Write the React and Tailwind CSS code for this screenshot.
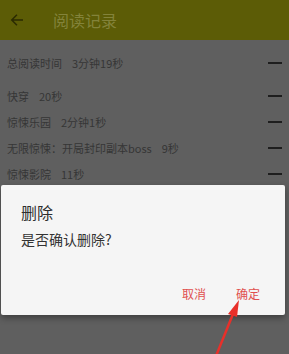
import React from 'react';

const rows = [
  { name: '快穿', time: '20秒' },
  { name: '惊悚乐园', time: '2分钟1秒' },
  { name: '无限惊悚：开局封印副本boss', time: '9秒' },
  { name: '惊悚影院', time: '11秒' },
];

const font = { fontFamily: '"Noto Sans CJK SC", "Noto Sans", sans-serif' };

// one record line with the delete dash on the right
const Row = ({ name, time }) => (
  <div className="flex h-[26px] items-center justify-between pl-[7px] pr-[7px]">
    <div className="flex items-center text-[11px] text-[#363636]">
      <span>{name}</span>
      <span className="ml-[10px]">{time}</span>
    </div>
    <div className="h-[2px] w-[14px] bg-[#1e1e1e]" />
  </div>
);

const App = () => {
  return (
    <div className="relative h-[354px] w-[289px] overflow-hidden bg-[#5f5f5f]" style={font}>
      {/* header */}
      <div className="flex h-[40px] items-center bg-[#5c5c06]">
        <svg className="ml-[10px] h-[14px] w-[14px]" viewBox="0 0 24 24" fill="none" stroke="#2a2a02" strokeWidth="2.6" strokeLinecap="square">
          <path d="M21 12H4M11 4l-8 8 8 8" />
        </svg>
        <span className="ml-[29px] text-[16px] text-[#83833a]">阅读记录</span>
      </div>

      {/* list */}
      <div className="pt-[10px]">
        <Row name="总阅读时间" time="3分钟19秒" />
        <div className="mt-[7px]">
          {rows.map((r) => (
            <Row key={r.name} name={r.name} time={r.time} />
          ))}
        </div>
      </div>

      {/* dialog */}
      <div className="absolute left-[1px] top-[185px] flex h-[130px] w-[284px] flex-col rounded-[2px] bg-[#f5f5f5] shadow-[0_3px_6px_rgba(0,0,0,0.35)]">
        <div className="ml-[20px] mt-[16px] text-[16px] leading-[22px] text-[#2e2e2e]">删除</div>
        <div className="ml-[20px] mt-[6px] text-[14px] leading-[20px] text-[#333]">是否确认删除?</div>
        <div className="mt-auto mb-[12px] flex justify-end gap-[30px] pr-[25px] text-[12px] leading-[18px] text-[#e05050]">
          <span>取消</span>
          <span>确定</span>
        </div>
      </div>

      {/* red pointer arrow */}
      <svg className="absolute left-0 top-0" width="289" height="354" viewBox="0 0 289 354">
        <path d="M216 356 L233 314" stroke="#e8302a" strokeWidth="2.5" strokeLinecap="round" />
        <path d="M239 300 L228 314 L237 317 Z" fill="#e8302a" />
      </svg>
    </div>
  );
};

export default App;
